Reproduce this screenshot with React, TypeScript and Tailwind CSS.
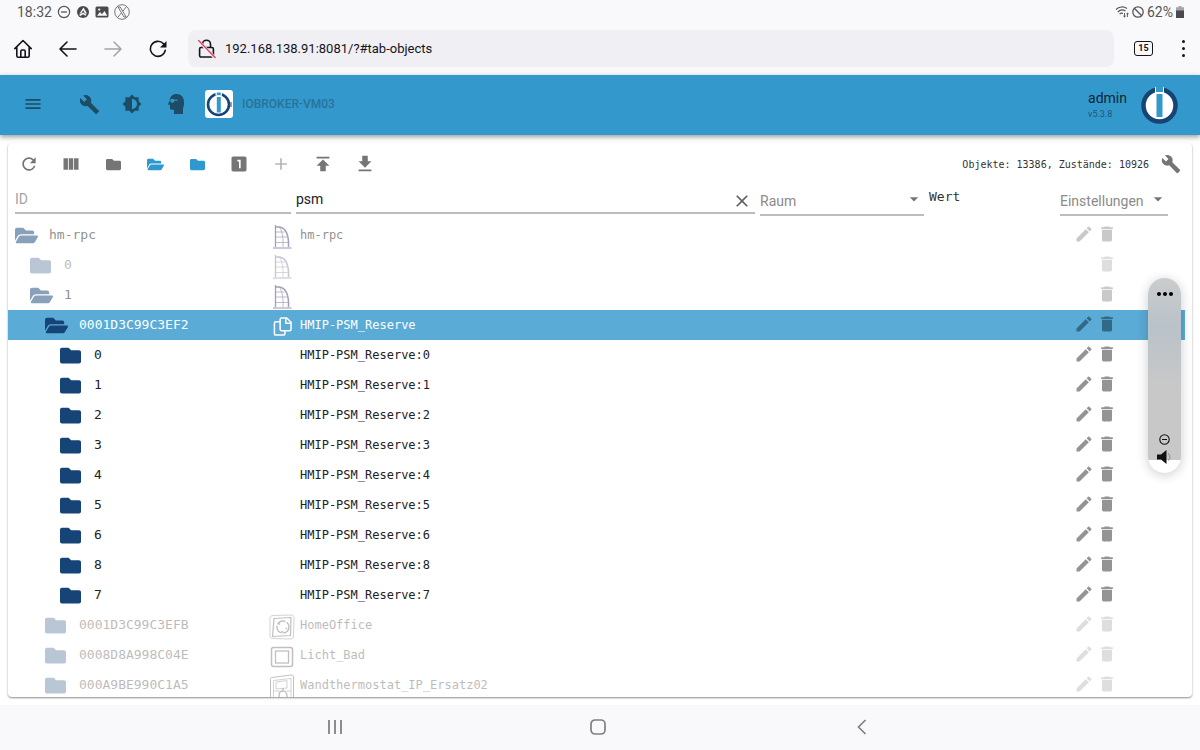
import { useState } from "react";
import type { ReactNode } from "react";
import clsx from "clsx";
import { FaFolder, FaFolderOpen } from "react-icons/fa";
import {
  MdAdd,
  MdArrowDropDown,
  MdBrightness6,
  MdBuild,
  MdClose,
  MdDelete,
  MdEdit,
  MdGetApp,
  MdLooksOne,
  MdMenu,
  MdMoreHoriz,
  MdPublish,
  MdRefresh,
  MdViewColumn,
} from "react-icons/md";

type Tone = "normal" | "dim" | "faint" | "selected";
type Picture = "ship" | "copy" | "socket" | "frame" | "thermostat";

type ObjectRow = {
  id: string;
  level: 0 | 1 | 2 | 3;
  tone: Tone;
  open?: boolean;
  picture?: Picture;
  name?: string;
  noEdit?: boolean;
};

const rows: ObjectRow[] = [
  { id: "hm-rpc", level: 0, tone: "dim", open: true, picture: "ship", name: "hm-rpc" },
  { id: "0", level: 1, tone: "faint", picture: "ship", noEdit: true },
  { id: "1", level: 1, tone: "dim", open: true, picture: "ship", noEdit: true },
  { id: "0001D3C99C3EF2", level: 2, tone: "selected", open: true, picture: "copy", name: "HMIP-PSM_Reserve" },
  { id: "0", level: 3, tone: "normal", name: "HMIP-PSM_Reserve:0" },
  { id: "1", level: 3, tone: "normal", name: "HMIP-PSM_Reserve:1" },
  { id: "2", level: 3, tone: "normal", name: "HMIP-PSM_Reserve:2" },
  { id: "3", level: 3, tone: "normal", name: "HMIP-PSM_Reserve:3" },
  { id: "4", level: 3, tone: "normal", name: "HMIP-PSM_Reserve:4" },
  { id: "5", level: 3, tone: "normal", name: "HMIP-PSM_Reserve:5" },
  { id: "6", level: 3, tone: "normal", name: "HMIP-PSM_Reserve:6" },
  { id: "8", level: 3, tone: "normal", name: "HMIP-PSM_Reserve:8" },
  { id: "7", level: 3, tone: "normal", name: "HMIP-PSM_Reserve:7" },
  { id: "0001D3C99C3EFB", level: 2, tone: "faint", picture: "socket", name: "HomeOffice" },
  { id: "0008D8A998C04E", level: 2, tone: "faint", picture: "frame", name: "Licht_Bad" },
  { id: "000A9BE990C1A5", level: 2, tone: "faint", picture: "thermostat", name: "Wandthermostat_IP_Ersatz02" },
];

const indent = {
  0: "pl-[7px]",
  1: "pl-[22px]",
  2: "pl-[37px]",
  3: "pl-[52px]",
};

const fade = {
  normal: "",
  selected: "",
  dim: "opacity-50",
  faint: "opacity-30",
};

function StatusBar() {
  return (
    <div className="flex h-[23px] shrink-0 items-center justify-between pl-[17px] pr-4 text-sm text-[#55555a]">
      <div className="flex items-center gap-[5px]">
        <span>18:32</span>
        <svg className="size-[14px]" viewBox="0 0 14 14" fill="none" stroke="currentColor">
          <circle cx="7" cy="7" r="5.6" strokeWidth="1.2" />
          <path d="M4 7h6" strokeWidth="1.3" />
        </svg>
        <svg className="size-[14px]" viewBox="0 0 14 14">
          <circle cx="7" cy="7" r="6" fill="#4a4a4e" />
          <path d="M7.500 2.500 11 8.500H9L7.200 5.200 5 8.500H3.500zM3 10l4-2.500 3.500 2.200-1 1L7 9.200 4.500 11z" fill="#f9f9fb" />
        </svg>
        <svg className="size-[14px]" viewBox="0 0 14 14">
          <rect x="0.5" y="1.5" width="13" height="11" rx="1.5" fill="#4a4a4e" />
          <path d="M2 10.8 5 7l2 2.2L9.5 6l2.8 4.8z" fill="#f9f9fb" />
          <circle cx="4.2" cy="4.6" r="1.1" fill="#f9f9fb" />
        </svg>
        <svg className="size-4" viewBox="0 0 16 16" fill="none" stroke="currentColor" strokeWidth="0.8">
          <circle cx="8" cy="8" r="7.3" />
          <path d="M4 3h2.2l6 10H10zM12.2 3 8.8 7.2M7.4 9 4 13" />
        </svg>
      </div>
      <div className="flex items-center gap-[3px]">
        <svg className="h-[13px] w-[14px]" viewBox="0 0 14 13" fill="none" stroke="currentColor" strokeWidth="1.2">
          <path d="M1 4.500a8.600 8.600 0 0 1 11-1M2.800 7A6 6 0 0 1 10.500 6M4.600 9.200A3.400 3.400 0 0 1 8 8.300" />
          <path d="M9.500 8v4M8.200 10.800 9.500 12l1.300-1.200M12.500 12V8M11.300 9.200l1.200-1.200 1.200 1.200" strokeWidth="0.9" />
        </svg>
        <svg className="size-3" viewBox="0 0 12 12" fill="none" stroke="currentColor" strokeWidth="1.3">
          <circle cx="6" cy="6" r="5.200" />
          <path d="M2.300 2.300 9.700 9.700" />
        </svg>
        <span>62%</span>
        <svg className="h-3 w-2" viewBox="0 0 8 12">
          <path d="M2.500 0h3v1.200H8V5H0V1.200h2.500z" fill="#a5a5aa" />
          <path d="M0 4.500h8V12H0z" fill="#4a4a4e" />
        </svg>
      </div>
    </div>
  );
}

function BrowserBar() {
  return (
    <div className="flex h-[52px] shrink-0 items-center pb-px pr-[13px] text-[#15141a]">
      <button aria-label="Home" className="flex w-[45px] justify-center">
        <svg className="size-5" viewBox="0 0 20 20" fill="none" stroke="currentColor" strokeWidth="1.6" strokeLinejoin="round" strokeLinecap="round">
          <path d="M1.800 9.600 10 1.500l8.200 8.100M3.800 8.200v8.600c0 .8.600 1.400 1.400 1.400h9.600c.8 0 1.400-.6 1.400-1.400V8.200" />
          <path d="M7.800 18v-5.600c0-.8.600-1.400 1.400-1.400h1.600c.8 0 1.400.6 1.400 1.400V18" />
        </svg>
      </button>
      <button aria-label="Back" className="flex w-[45px] justify-center">
        <svg className="h-4 w-[18px]" viewBox="0 0 18 16" fill="none" stroke="currentColor" strokeWidth="1.600" strokeLinecap="round" strokeLinejoin="round">
          <path d="M8 1 1 8l7 7M1 8h16" />
        </svg>
      </button>
      <button aria-label="Forward" className="flex w-[45px] justify-center text-[#a3a3a8]">
        <svg className="h-4 w-[18px]" viewBox="0 0 18 16" fill="none" stroke="currentColor" strokeWidth="1.500" strokeLinecap="round" strokeLinejoin="round">
          <path d="m10 1 7 7-7 7M17 8H1" />
        </svg>
      </button>
      <button aria-label="Reload" className="flex w-[45px] justify-center">
        <svg className="size-[18px]" viewBox="0 0 18 18">
          <path d="M14.500 3.800A7.500 7.500 0 1 0 16.300 10.200" fill="none" stroke="currentColor" strokeWidth="1.600" strokeLinecap="round" />
          <path d="M17.500 1v6.500H11z" fill="currentColor" />
        </svg>
      </button>
      <div className="ml-2 flex h-[37px] flex-1 items-center gap-2 rounded-lg bg-[#f0f0f4] px-[9px]">
        <svg className="size-5 shrink-0" viewBox="0 0 20 20" fill="none" strokeLinecap="round" strokeLinejoin="round">
          <path d="M5.500 8V5.200a4 4 0 0 1 8 0V8M4 8.500h11c.8 0 1.400.6 1.400 1.400v6.700c0 .8-.6 1.400-1.400 1.400H4c-.8 0-1.400-.6-1.400-1.400V9.900c0-.8.600-1.400 1.400-1.400z" stroke="#15141a" strokeWidth="1.600" />
          <path d="m1.600 2 16.500 17" stroke="#f0f0f4" strokeWidth="3" />
          <path d="m1.600 1.500 16.500 17" stroke="#e0435c" strokeWidth="1.400" />
        </svg>
        <input
          type="text"
          aria-label="Address"
          defaultValue="192.168.138.91:8081/?#tab-objects"
          className="min-w-0 flex-1 bg-transparent text-[13px] outline-none"
        />
      </div>
      <button aria-label="Tabs" className="ml-5 flex h-[15px] w-[19px] items-center justify-center rounded-[3px] border border-[#15141a] text-[9px] font-bold">
        15
      </button>
      <button aria-label="Menu" className="ml-[26px] flex w-2 flex-col items-center gap-1">
        <span className="size-[3px] rounded-full bg-[#15141a]" />
        <span className="size-[3px] rounded-full bg-[#15141a]" />
        <span className="size-[3px] rounded-full bg-[#15141a]" />
      </button>
    </div>
  );
}

function AppBar() {
  return (
    <header className="z-10 flex h-[60px] shrink-0 items-center justify-between bg-[#3399cc] pb-[2px] pl-[23px] pr-[22px] text-[#1c4c66] shadow-[0_2px_5px_rgba(0,0,0,0.4)]">
      <div className="flex items-center">
        <button aria-label="Menü">
          <MdMenu className="size-5" />
        </button>
        <button aria-label="Einstellungen" className="ml-9">
          <MdBuild className="size-[21px]" />
        </button>
        <button aria-label="Thema" className="ml-[22px]">
          <MdBrightness6 className="size-5" />
        </button>
        <button aria-label="Expertenmodus" className="ml-[26px]">
          <svg className="h-5 w-4" viewBox="0 0 16 20">
            <path d="M8.600 0C4.600 0 2 2.600 1.900 6L.2 9.800c-.3.600 0 1 .6 1h1.200v3.500c0 .8.700 1.400 1.500 1.400H6V20h9v-5.600c.8-1.600 1-3.600 1-6.400C16 3 13 0 8.600 0z" fill="currentColor" />
            <circle cx="4.300" cy="6.800" r="2" fill="#3399cc" />
            <path d="M6 5.600h3.500v1.200H6z" fill="#3399cc" />
          </svg>
        </button>
        <a href="#host" className="ml-[21px] flex items-center gap-[9px] text-xs font-medium text-[#27739a]">
          <svg className="size-7 rounded-[3px] bg-white" viewBox="0 0 28 28">
            <circle cx="13.500" cy="14.500" r="10.500" fill="none" stroke="#164477" strokeWidth="2.600" />
            <path d="M10.500 1.500h6.500v4.200h-6.500z" fill="#fff" />
            <path d="M11.800 7h4v15.500h-4zM11.800 2.500h4V5h-4z" fill="#3399cc" />
            <path d="M26 12v5" stroke="#164477" strokeWidth="1" />
          </svg>
          IOBROKER-VM03
        </a>
      </div>
      <div className="flex items-center gap-[14px]">
        <div>
          <div className="text-sm leading-5 text-[#0d2633]">admin</div>
          <div className="text-[9px] leading-3 text-[#1c5878]">v5.3.8</div>
        </div>
        <svg className="h-11 w-[37px]" viewBox="0 0 37 44">
          <circle cx="18.500" cy="23.500" r="16" fill="#fff" stroke="#164477" strokeWidth="4.500" />
          <path d="M14 3h9v7h-9z" fill="#3399cc" />
          <path d="M14.500 5v6h8V5" fill="none" stroke="#fff" strokeWidth="1" />
          <path d="M15.500 12h6v23h-6z" fill="#3399cc" />
        </svg>
      </div>
    </header>
  );
}

function ToolButton({ label, className, children }: { label: string; className?: string; children: ReactNode }) {
  return (
    <button aria-label={label} className={clsx("flex h-[42px] w-[42px] items-center justify-center", className)}>
      {children}
    </button>
  );
}

function Toolbar() {
  return (
    <div className="flex h-[42px] shrink-0 items-center justify-between pr-[11px] text-[#757575]">
      <div className="flex">
        <ToolButton label="Aktualisieren"><MdRefresh className="size-5" /></ToolButton>
        <ToolButton label="Spalten"><MdViewColumn className="size-5" /></ToolButton>
        <ToolButton label="Alle schließen"><FaFolder className="size-[15px]" /></ToolButton>
        <ToolButton label="Alle öffnen" className="text-[#2f98cf]"><FaFolderOpen className="size-[17px]" /></ToolButton>
        <ToolButton label="Eine Ebene schließen" className="text-[#2f98cf]"><FaFolder className="size-[15px]" /></ToolButton>
        <ToolButton label="Zustände anzeigen"><MdLooksOne className="size-5" /></ToolButton>
        <ToolButton label="Hinzufügen" className="text-[#b5b5b5]"><MdAdd className="size-5" /></ToolButton>
        <ToolButton label="Hochladen"><MdPublish className="size-[22px]" /></ToolButton>
        <ToolButton label="Herunterladen"><MdGetApp className="size-[22px]" /></ToolButton>
      </div>
      <div className="flex items-center gap-3">
        <span className="font-['DejaVu_Sans_Mono',monospace] text-[10px] text-[#333]">
          Objekte: 13386, Zustände: 10926
        </span>
        <button aria-label="Objekteinstellungen">
          <MdBuild className="size-5" />
        </button>
      </div>
    </div>
  );
}

function FilterSelect({ label, className }: { label: string; className: string }) {
  return (
    <div className={clsx("relative h-[31px] border-b-2 border-[#bdbdbd]", className)}>
      <select aria-label={label} className="h-[29px] w-full appearance-none bg-transparent pt-[3px] text-sm text-[#8b8b8b] outline-none">
        <option>{label}</option>
      </select>
      <MdArrowDropDown className="pointer-events-none absolute right-0 top-1 size-5 text-[#757575]" />
    </div>
  );
}

function Filters() {
  const [name, setName] = useState("psm");

  return (
    <div className="flex h-[35px] shrink-0 gap-[5px] pl-[7px] pr-6">
      <input
        type="text"
        aria-label="ID"
        placeholder="ID"
        className="h-[29px] w-[276px] border-b-2 border-[#bdbdbd] bg-transparent text-sm outline-none placeholder:text-[#a5a5a5]"
      />
      <div className="flex h-[29px] flex-1 items-center border-b-2 border-[#bdbdbd]">
        <input
          type="text"
          aria-label="Name"
          value={name}
          onChange={(e) => setName(e.target.value)}
          className="min-w-0 flex-1 bg-transparent text-sm text-[#222] outline-none"
        />
        <button aria-label="Filter löschen" onClick={() => setName("")} className="mr-[3px] mt-1 text-[#616161]">
          <MdClose className="size-5" />
        </button>
      </div>
      <FilterSelect label="Raum" className="w-[164px]" />
      <div className="w-[126px] pt-[2px] font-['DejaVu_Sans_Mono',monospace] text-[13px] leading-5 text-[#333]">Wert</div>
      <FilterSelect label="Einstellungen" className="w-[108px]" />
    </div>
  );
}

function RowPicture({ kind }: { kind: Picture }) {
  switch (kind) {
    case "ship":
      return (
        <svg className="mx-auto size-[26px]" viewBox="0 0 26 26" fill="none" stroke="#4a4178" strokeWidth="1">
          <path d="M6.500 1v22" strokeWidth="1.300" />
          <path d="M6.500 3h4c6 1 9.500 8 9 20" strokeWidth="1.500" />
          <path d="M10 3c3 3 4.500 10 4 20M6.500 8h9M6.500 13h12M6.500 18.500h13" strokeOpacity="0.7" />
          <path d="M4 24h18.500" strokeWidth="2" stroke="#9b96b5" />
        </svg>
      );
    case "copy":
      return (
        <svg className="mx-auto size-[19px]" viewBox="0 0 20 20" fill="none" stroke="#fff" strokeWidth="1.600" strokeLinejoin="round">
          <path d="M9 1h5.500L19 5.500V13c0 1-.5 1.500-1.500 1.500H9c-1 0-1.500-.5-1.500-1.500V2.500C7.500 1.500 8 1 9 1zM13.500 1v5.500H19" />
          <path d="M7.500 5H3c-1 0-1.500.5-1.500 1.500v11c0 1 .5 1.500 1.500 1.500h8c1 0 1.500-.5 1.500-1.500v-3" />
        </svg>
      );
    case "socket":
      return (
        <svg className="mx-auto size-[26px]" viewBox="0 0 26 26" fill="none" stroke="#333">
          <path d="M4 1.500 22 1c2 0 3 1 3 3l-.5 18c0 2-1 3-3 3L4 24.500c-2 0-3-1-3-3v-17c0-2 1-3 3-3z" strokeWidth="1" strokeOpacity="0.700" />
          <path d="M5 4.500 22 3.500 21.500 21.500 3.500 22.500z" strokeWidth="1.200" strokeLinejoin="round" />
          <circle cx="14" cy="13" r="6" strokeWidth="1.400" strokeDasharray="9 1.500" />
          <path d="m9.500 9 1.500 1.500M18 14l-1.500 1M12.500 17l2 1.500" strokeWidth="1.300" />
        </svg>
      );
    case "frame":
      return (
        <svg className="mx-auto size-6" viewBox="0 0 24 24" fill="none" stroke="#333">
          <rect x="1.500" y="2.500" width="21" height="19" rx="2" strokeWidth="1.500" />
          <rect x="5.500" y="6" width="13" height="12" strokeWidth="1.300" />
        </svg>
      );
    case "thermostat":
      return (
        <svg className="mx-auto size-[26px]" viewBox="0 0 26 26" fill="none" stroke="#333" strokeWidth="1">
          <path d="M3 3.500 22 1c1.500 0 2.500.5 2.500 2v21H1.500V5.500c0-1 .5-2 1.500-2z" />
          <path d="M4.500 24V6.500L22 4.500V24M7 8l11-1.500V14L7 15zM4.500 17h6M17.500 17H22" strokeOpacity="0.700" />
          <path d="M10 23c0-5 1-6 4-6s4 1.500 4 6M14 17v-3" strokeWidth="1.400" />
        </svg>
      );
  }
}

function TreeRow({ row }: { row: ObjectRow }) {
  const selected = row.tone === "selected";

  return (
    <tr className={clsx("h-[30px]", selected ? "bg-[#5aabd6] text-white" : "text-[#222]")}>
      <td className={clsx("p-0", indent[row.level])}>
        <div className={clsx("flex items-center", fade[row.tone])}>
          <span className="w-[34px] pt-px text-[#164477]">
            {row.open ? <FaFolderOpen className="size-[23px]" /> : <FaFolder className="size-[21px]" />}
          </span>
          <span className="text-[13px] leading-5">{row.id}</span>
        </div>
      </td>
      <td className="p-0">
        <div className={clsx("pt-[3px]", fade[row.tone])}>{row.picture && <RowPicture kind={row.picture} />}</div>
      </td>
      <td className="p-0 pl-1 text-xs">
        <div className={clsx("truncate", fade[row.tone])}>{row.name}</div>
      </td>
      <td className="p-0">
        <div
          className={clsx(
            "flex items-center justify-end gap-[3px] pb-[3px] pr-[68px]",
            fade[row.tone],
            selected ? "text-[#316a86]" : "text-[#949494]"
          )}
        >
          {!row.noEdit && (
            <button aria-label={`${row.id} bearbeiten`}>
              <MdEdit className="size-5" />
            </button>
          )}
          <button aria-label={`${row.id} löschen`}>
            <MdDelete className="size-5" />
          </button>
        </div>
      </td>
    </tr>
  );
}

function VolumePanel() {
  return (
    <div className="absolute right-[11px] top-[135px] z-20 flex h-[195px] w-[33px] flex-col items-center justify-between overflow-hidden rounded-full bg-linear-to-b from-[#cbcccd] from-0% via-[#b9c2c9] via-25% to-[#c8c8c8] to-55% shadow-[0_2px_12px_rgba(0,0,0,0.2)]">
      <MdMoreHoriz className="mt-1 size-6 text-black" />
      <div className="flex w-full flex-col items-center">
        <svg className="size-[11px]" viewBox="0 0 11 11" fill="none" stroke="#111" strokeWidth="1.100">
          <circle cx="5.500" cy="5.500" r="4.700" />
          <path d="M3 5.500h5" />
        </svg>
        <div className="flex h-7 w-full justify-center bg-linear-to-b from-transparent from-55% to-white to-55%">
          <svg className="mt-[5px] h-[14px] w-[15px]" viewBox="0 0 15 14">
            <path d="M0 4.500h4L9.500 0v14L4 9.500H0z" fill="#111" />
            <path d="M11 3.500c2.500 1.500 2.500 5.500 0 7" fill="none" stroke="#999" strokeWidth="1.300" />
          </svg>
        </div>
      </div>
      <input
        type="range"
        aria-label="Lautstärke"
        defaultValue={5}
        className="absolute inset-0 h-full w-full opacity-0 [direction:rtl] [writing-mode:vertical-lr]"
      />
    </div>
  );
}

function NavigationBar() {
  return (
    <nav className="flex h-[45px] shrink-0 items-center justify-center pb-[2px] pr-[3px] text-[#808085]">
      <button aria-label="Letzte Apps" className="flex w-[22%] justify-center">
        <svg className="size-4" viewBox="0 0 16 16" stroke="currentColor" strokeWidth="1.800">
          <path d="M2 1v14M8 1v14M14 1v14" />
        </svg>
      </button>
      <button aria-label="Startseite" className="flex w-[22%] justify-center">
        <svg className="size-4" viewBox="0 0 16 16" fill="none" stroke="currentColor" strokeWidth="1.700">
          <rect x="1" y="1" width="14" height="14" rx="4" />
        </svg>
      </button>
      <button aria-label="Zurück" className="flex w-[22%] justify-center">
        <svg className="size-4" viewBox="0 0 16 16" fill="none" stroke="currentColor" strokeWidth="1.700">
          <path d="M11.500 1 4.500 8l7 7" />
        </svg>
      </button>
    </nav>
  );
}

export default function App() {
  return (
    <div className="flex h-screen flex-col bg-[#f9f9fb] font-[Roboto,sans-serif]">
      <StatusBar />
      <BrowserBar />
      <AppBar />
      <main className="flex min-h-0 flex-1 flex-col bg-white p-2">
        <section className="relative flex min-h-0 flex-1 flex-col rounded bg-white shadow-[0_1px_2px_rgba(0,0,0,0.45)]">
          <Toolbar />
          <Filters />
          <div className="min-h-0 flex-1 overflow-hidden pr-[7px]">
            <table className="w-full table-fixed border-collapse font-['DejaVu_Sans_Mono',monospace]">
              <colgroup>
                <col className="w-[260px]" />
                <col className="w-7" />
                <col />
                <col className="w-[120px]" />
              </colgroup>
              <tbody>
                {rows.map((row) => (
                  <TreeRow key={`${row.level}-${row.id}`} row={row} />
                ))}
              </tbody>
            </table>
          </div>
          <VolumePanel />
        </section>
      </main>
      <NavigationBar />
    </div>
  );
}
